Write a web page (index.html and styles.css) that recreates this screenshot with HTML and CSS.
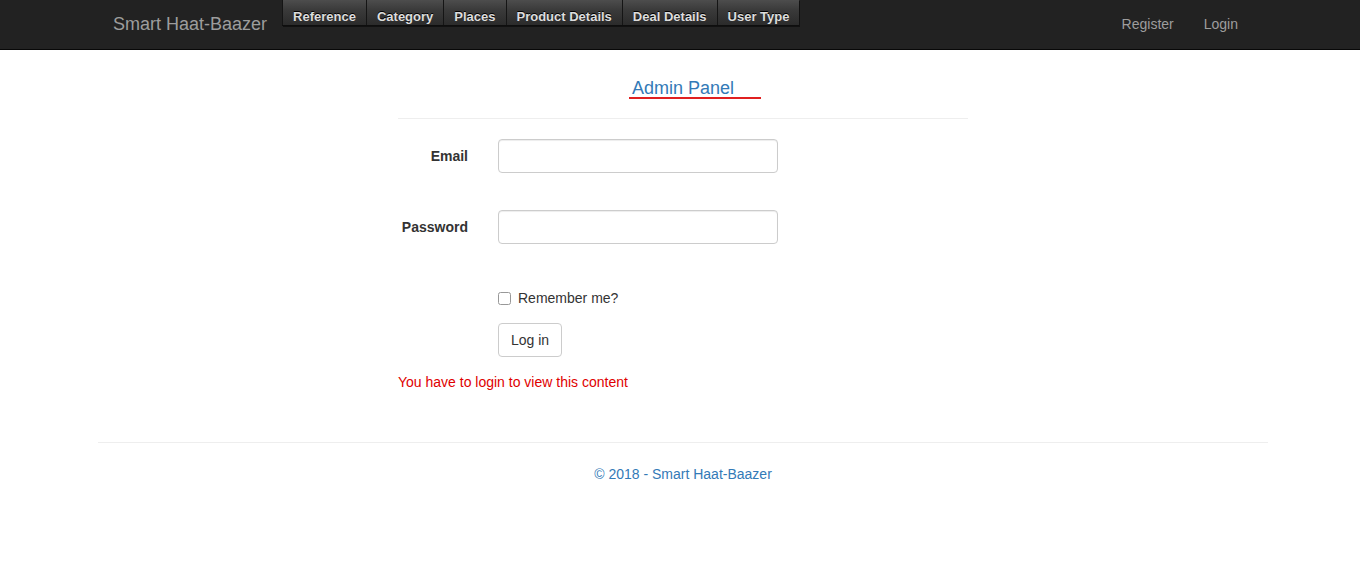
FILE: index.html
```html
<!DOCTYPE html>
<html>
<head>
<meta charset="utf-8">
<link rel="stylesheet" href="styles.css">
</head>
<body>
<nav class="navbar">
  <div class="nav-inner">
    <a class="brand" href="#">Smart Haat-Baazer</a>
    <ul class="tabs">
      <li><a href="#">Reference</a></li>
      <li><a href="#">Category</a></li>
      <li><a href="#">Places</a></li>
      <li><a href="#">Product Details</a></li>
      <li><a href="#">Deal Details</a></li>
      <li><a href="#">User Type</a></li>
    </ul>
    <ul class="nav-right">
      <li><a href="#">Register</a></li>
      <li><a href="#">Login</a></li>
    </ul>
  </div>
</nav>
<div class="page">
  <main class="content">
    <h4 class="title"><span class="title-text">Admin Panel</span></h4>
    <hr class="sep">
    <form class="form">
      <div class="row">
        <label class="lbl">Email</label>
        <input class="input" type="text">
      </div>
      <div class="row">
        <label class="lbl">Password</label>
        <input class="input" type="password">
      </div>
      <div class="row row-check">
        <span></span>
        <label class="check"><input type="checkbox" class="cb"> Remember me?</label>
      </div>
      <div class="row row-btn">
        <span></span>
        <button type="button" class="btn">Log in</button>
      </div>
    </form>
    <p class="error">You have to login to view this content</p>
  </main>
  <footer class="footer">
    <hr class="foot-sep">
    <p class="copy">© 2018 - Smart Haat-Baazer</p>
  </footer>
</div>
</body>
</html>
```
FILE: styles.css
```css
* { box-sizing: border-box; }
html, body { margin: 0; padding: 0; }
body {
  font-family: "Liberation Sans", Arial, sans-serif;
  font-size: 14px;
  line-height: 1.42857;
  color: #333;
  background: #fff;
}
a { text-decoration: none; }

.navbar {
  height: 50px;
  background: #222;
  border-bottom: 1px solid #080808;
  padding-left: 6px;
}
.nav-inner {
  width: 1170px;
  margin: 0 auto;
  display: flex;
  align-items: flex-start;
}
.brand {
  font-size: 18px;
  color: #9d9d9d;
  line-height: 20px;
  padding: 14px 15px 15px 15px;
}
.tabs {
  list-style: none;
  margin: 0;
  padding: 0;
  display: flex;
  border-bottom: 1px solid #0e0e0e;
  box-shadow: 1px 1px 0 #111;
}
.tabs li {
  border-left: 1px solid #151515;
  background: linear-gradient(#4d4d4d, #3a3a3a 40%, #2b2b2b);
}
.tabs li a {
  display: block;
  font-weight: bold;
  font-size: 13px;
  color: #ddd;
  padding: 9px 10px 1px 10px;
  line-height: 15px;
  text-shadow: 0 -1px 0 #000;
}
.nav-right {
  list-style: none;
  margin: 0 15px 0 auto;
  padding: 0;
  display: flex;
}
.nav-right li a {
  display: block;
  color: #9d9d9d;
  padding: 14px 15px 16px;
  line-height: 20px;
}

.page { padding-left: 6px; }
.content {
  width: 570px;
  margin: 0 auto;
}
.title {
  margin: 27px 0 0;
  text-align: center;
  font-size: 18px;
  font-weight: normal;
  line-height: 22px;
}
.title-text {
  position: relative;
  color: #337ab7;
}
.title-text::after {
  content: "";
  position: absolute;
  left: -3px;
  top: 19px;
  width: 132px;
  height: 2px;
  background: #e02020;
}
.sep {
  border: 0;
  border-top: 1px solid #eee;
  margin: 19px 0 20px;
}
.form { margin: 0; }
.row {
  display: grid;
  grid-template-columns: 70px 280px;
  column-gap: 30px;
  align-items: center;
  margin-bottom: 37px;
}
.lbl {
  font-weight: bold;
  text-align: right;
  padding-top: 2px;
}
.input {
  height: 34px;
  width: 280px;
  border: 1px solid #ccc;
  border-radius: 4px;
  box-shadow: inset 0 1px 1px rgba(0,0,0,.075);
  padding: 6px 12px;
  font-family: inherit;
  font-size: 14px;
}
.row-check { padding-top: 7px; margin-bottom: 15px; }
.check {
  display: flex;
  align-items: center;
  gap: 7px;
  line-height: 20px;
}
.cb {
  margin: 0;
  width: 13px;
  height: 13px;
  accent-color: #ccc;
  opacity: 0.75;
}
.row-btn { margin-bottom: 15px; justify-items: start; }
.btn {
  height: 34px;
  padding: 6px 12px;
  font-family: inherit;
  font-size: 14px;
  color: #333;
  background: #fff;
  border: 1px solid #ccc;
  border-radius: 4px;
}
.error {
  margin: 0;
  color: #e00000;
  line-height: 20px;
}
.footer {
  width: 1170px;
  margin: 0 auto;
}
.foot-sep {
  border: 0;
  border-top: 1px solid #eee;
  margin: 50px 0 21px;
}
.copy {
  margin: 0;
  text-align: center;
  color: #337ab7;
  line-height: 20px;
}
```
